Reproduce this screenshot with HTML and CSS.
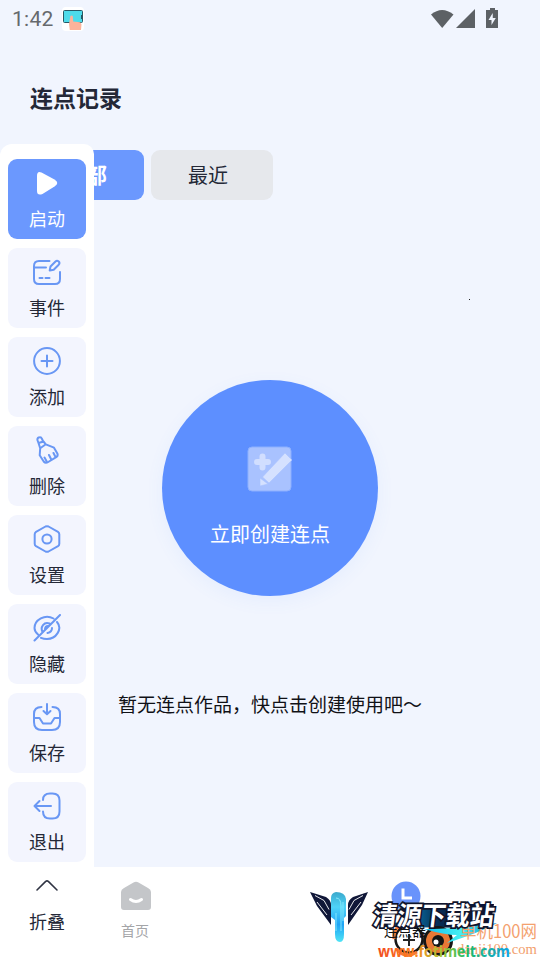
FILE: index.html
```html
<!DOCTYPE html>
<html lang="zh-CN">
<head>
<meta charset="utf-8">
<title>连点记录</title>
<link rel="stylesheet" href="styles.css">
</head>
<body>
<div class="screen">
  <header class="status">
    <span class="time">1:42</span>
    <svg class="app" width="22" height="24" viewBox="0 0 22 24"><rect width="22" height="24" rx="4" fill="#fff"/><rect x="1.5" y="3.5" width="19" height="12" rx="1" fill="#4edbea" stroke="#285865"/><path d="M19 8h2v4h-2z" fill="#285865"/><path d="M8.400 9q1.300-1.200 2.400 0l.4 5.500 7 .7 1.300 2-.5 5.800H7.800L7 17z" fill="#fcb39b"/></svg>
    <svg class="signals" width="70" height="24" viewBox="0 0 70 24" fill="#5d6165"><path d="M1 6.500Q12-2.500 23.500 6.500L12.200 20z"/><path d="M45 1v19H26z"/><path d="M60 0h5v2h3v18H56V2h4z"/><path d="M62.700 5L58.500 12h3v5l4.300-7h-3z" fill="#f1f5fe"/></svg>
  </header>
  <h1>连点记录</h1>
  <nav class="tabs"><span class="tab active">全部</span><span class="tab">最近</span></nav>
  <main>
    <button class="create">
      <svg width="46" height="46" viewBox="0 0 46 46"><rect x="1" y="1" width="43" height="44" rx="4" fill="#a9c2ff" stroke="#8db0ff"/><path d="M15.500 10.500v11M10 16h11" stroke="#d1deff" stroke-width="6" stroke-linecap="round"/><path d="M15.500 31L38 7l7 7-23 23zM13 32l8 6-8 2z" fill="#d5e1ff" stroke="#a9c2ff" stroke-width=".6"/></svg>
      <span>立即创建连点</span>
    </button>
    <p class="empty">暂无连点作品，快点击创建使用吧～</p>
  </main>
  <footer>
    <div class="nav home"><svg width="30" height="30" viewBox="0 0 30 30"><path d="M12.500 1.400Q15 0 17.500 1.400L27 7q3 1.500 3 4v15q0 3-3 3H3q-3 0-3-3V11q0-2.500 3-4z" fill="#c4c6c9"/><path d="M9.500 18.500q5.500 4 11 0" fill="none" stroke="#fff" stroke-width="3" stroke-linecap="round"/></svg><span>首页</span></div>
    <div class="nav clicker"><svg width="30" height="30" viewBox="0 0 30 30"><circle cx="15" cy="15" r="14.500" fill="#6993fb"/><path d="M12 7.500V17h9" fill="none" stroke="#fff" stroke-width="3"/></svg></div>
  </footer>
  <i class="cursor-dot"></i>

  <aside class="panel">
    <div class="tool start"><svg viewBox="0 0 28 28"><path d="M4 7Q4 1.500 8.500 3.500L21.500 10.500Q27 14 21.500 17.500L9.500 25Q4 27 4 22z" fill="#fff"/></svg><span>启动</span></div>
    <div class="tool"><svg viewBox="0 0 28 28"><path d="M16.500 3H6Q1 3 1 8v13q0 5 5 5h16q5 0 5-5v-7M1 9.500h12M6.500 20h3M12.500 20h4M17.500 8.500l5-5q1.500-1.500 3.200 0 1.500 1.500 0 3.200l-5 5-4 .8z"/></svg><span>事件</span></div>
    <div class="tool"><svg viewBox="0 0 28 28"><circle cx="14" cy="14" r="12.900"/><path d="M14 8.500v11M8.500 14h11"/></svg><span>添加</span></div>
    <div class="tool"><svg viewBox="0 0 28 28"><path d="M5.500 7L4.400 4Q4.200 1.500 6.600 1.300 8.300 1 9 3l1.500 3M5.500 7l5-1.500 2.300 2.800-5.600 4zM7.200 12.300l-.5 7 4 6.200q1.800 2.200 4.500.5l8-4.800q2.300-1.600 1-4L21 11.700l-8.200-3.400M11.500 21.500l2 3.500M16 19l2 4M20.500 17l1.500 3"/></svg><span>删除</span></div>
    <div class="tool"><svg viewBox="0 0 28 28"><path d="M12.500 1.500Q14 .8 15.500 1.500l9.500 5.300q1.300.8 1.300 2.500v9.400q0 1.700-1.300 2.500l-9.500 5.300q-1.500.7-3 0L3 21.200q-1.300-.8-1.300-2.500V9.300Q1.700 7.600 3 6.800z"/><circle cx="14" cy="14" r="4.600"/></svg><span>设置</span></div>
    <div class="tool"><svg viewBox="0 0 28 28"><path d="M1.500 26.500L27 1M20.500 4.500C12-.5 1.500 6 1.500 14q0 3.500 3.500 6.500M24 8c6 7-1 17-10 17q-3.300 0-6-1.200M9.500 18C7 13 11 7.500 16.500 9.500M19 14q0 4-4.500 5M12 15q.3-3 3-3"/></svg><span>隐藏</span></div>
    <div class="tool"><svg viewBox="0 0 28 28"><path d="M8.500 4Q1 4 1 11v8q0 8 8 8h10q8 0 8-8v-8q0-7-7.500-7M14 1v10M10.500 8l3.500 3.300L17.500 8M1 15h5.500l3.500 5.500h8l3.500-5.500H27"/></svg><span>保存</span></div>
    <div class="tool"><svg viewBox="0 0 28 28"><path d="M10 8q0-6.500 7-6.500h2.500q7 0 7 7v11q0 7-7 7H17q-7 0-7-7M18 14H1.500M6.500 9L1.500 14l5 5"/></svg><span>退出</span></div>
    <div class="tool fold"><svg viewBox="0 0 28 28"><path d="M4 18L12.700 9.400q1.300-1 2.600 0L24 18"/></svg><span>折叠</span></div>
  </aside>

  <div class="watermark">
    <svg class="art" width="240" height="90" viewBox="0 0 240 90">
      <defs>
        <linearGradient id="stem" x2="0" y2="1"><stop stop-color="#3ba9cc"/><stop offset=".3" stop-color="#4fd3f8"/><stop offset=".65" stop-color="#1fa4f6"/><stop offset="1" stop-color="#4fe4f5"/></linearGradient>
        <linearGradient id="band"><stop stop-color="#0a1b3b"/><stop offset=".25" stop-color="#0878ad"/><stop offset=".5" stop-color="#082e55"/><stop offset="1" stop-color="#0a0c30"/></linearGradient>
        <linearGradient id="url"><stop stop-color="#f14b22"/><stop offset=".28" stop-color="#ff821c"/><stop offset=".48" stop-color="#a9c737"/><stop offset=".66" stop-color="#22ba62"/><stop offset="1" stop-color="#10a4e8"/></linearGradient>
        <linearGradient id="swoosh"><stop stop-color="#10bdf0"/><stop offset=".5" stop-color="#46eef2"/><stop offset="1" stop-color="#0d8fd0"/></linearGradient>
      </defs>
      <path d="M10 22l16 5q5 3 5 8v20L17 36zM68 22l-15 5q-5 3-5 8v20l14-20z" fill="#101738"/>
      <path d="M15 25.500l9 5 5 9M17 32l10 13M63 25.500l-9 5-5 9M61 32L51 45" fill="none" stroke="#fff" stroke-width=".9"/>
      <path d="M31 28q0-5 5-6 9 0 10 7v17l-2 2v16q0 8-4 8-5 0-5-8V50l-4-3z" fill="url(#stem)"/>
      <path d="M36 28q5 0 5 8v25M43 32v19M36 43v18" fill="none" stroke="#9af3ff" stroke-width=".8"/>
      <path d="M118 34h76l-4 24-108-1 3-4 29-1z" fill="url(#band)"/>
      <circle cx="109" cy="69" r="13.500" fill="#fff" stroke="#161616" stroke-width="2.500"/>
      <path d="M94 69q-1-11 9-15 5-3 12-1M97 79q8 11 20 3" fill="none" stroke="#f57a35" stroke-width="3"/>
      <path d="M109 64v12M103 70h12" stroke="#252525" stroke-width="2"/>
      <circle cx="138" cy="71" r="13.500" fill="#e87835" stroke="#151515" stroke-width="3"/>
      <circle cx="138" cy="71" r="6" fill="#151515"/><circle cx="136" cy="72" r="2.500" fill="#fff"/>
      <text class="clicker-label" x="84" y="66">连点器</text>
      <path d="M124 59q30 0 73-6-16 9-50 20l10-8q-12 0-33-6z" fill="url(#swoosh)"/>
      <text class="partner" x="160" y="68" textLength="77" lengthAdjust="spacingAndGlyphs">单机100网</text>
      <text class="domain" x="157" y="84" textLength="80" lengthAdjust="spacingAndGlyphs">danji100.com</text>
      <g transform="skewX(-7)"><text class="brand" x="79" y="55" textLength="121" lengthAdjust="spacingAndGlyphs">清源下载站</text></g>
      <text class="url" x="78" y="87" textLength="132" lengthAdjust="spacingAndGlyphs" fill="url(#url)">www.fotimeit.com</text>
    </svg>
  </div>
</div>
</body>
</html>
```
FILE: styles.css
```css
* { box-sizing: border-box; }
body { margin: 0; }
.screen {
  position: relative;
  display: flex;
  flex-direction: column;
  width: 540px;
  height: 960px;
  overflow: hidden;
  background: #f1f5fe;
  color: #242837;
  font-family: Roboto, "Noto Sans CJK SC", sans-serif;
}
.status { display: flex; align-items: center; height: 38px; padding-left: 12px; }
.time { width: 50px; color: #66696d; font-size: 21px; letter-spacing: .3px; }
.signals { margin-left: auto; margin-right: 40px; margin-top: 1px; }
h1 { margin: 44px 0 0 30px; font-size: 23px; line-height: 36px; font-weight: 700; }
.tabs { display: flex; gap: 7px; margin: 32px 0 0 22px; }
.tab {
  width: 122px;
  height: 50px;
  padding-right: 8px;
  border-radius: 9px;
  background: #e6e8ec;
  text-align: center;
  font-size: 20px;
  line-height: 52px;
}
.tab.active { padding: 0 0 0 4px; background: #6b98fe; color: #fff; font-size: 22px; font-weight: 700; }
main { flex: 1; display: flex; flex-direction: column; align-items: center; padding-top: 180px; }
.create {
  display: flex;
  flex-direction: column;
  align-items: center;
  gap: 28px;
  width: 216px;
  height: 216px;
  padding: 66px 0 0;
  border: 0;
  border-radius: 50%;
  background: #5d8fff;
  box-shadow: 0 5px 18px #5c8eff12;
  color: #fff;
  font: 20px/30px Roboto, "Noto Sans CJK SC", sans-serif;
}
.empty { margin: 95px 0 0; color: #101116; font-size: 19px; line-height: 30px; }
footer { display: flex; height: 93px; background: #fff; }
.nav { display: flex; flex-direction: column; align-items: center; width: 270px; padding-top: 14px; font-size: 14px; line-height: 20px; }
.nav span { margin-top: 10px; }
.nav.home { color: #a4a5a8; }
.home svg { margin-left: 2px; }
.clicker svg { margin-left: 1px; }
.clicker-label { fill: #111; font: 14px "Noto Sans CJK SC", sans-serif; }
.cursor-dot { position: absolute; left: 469px; top: 299px; width: 1px; height: 1px; background: #222; }
.panel {
  position: absolute;
  left: 0;
  top: 144px;
  display: flex;
  flex-direction: column;
  gap: 9px;
  width: 94px;
  height: 816px;
  padding: 15px 8px 0;
  border-radius: 12px 10px 0 0;
  background: #fff;
}
.tool {
  display: flex;
  flex-direction: column;
  align-items: center;
  flex: 0 0 80px;
  padding-top: 10px;
  border-radius: 9px;
  background: #f3f5fe;
  font-size: 18px;
  line-height: 26px;
}
.tool svg { width: 28px; height: 28px; margin-bottom: 10px; fill: none; stroke: #6997f4; stroke-width: 2; stroke-linecap: round; stroke-linejoin: round; }
.start { background: #6b98fe; color: #fff; }
.tool.start svg { stroke: none; }
.fold { background: #fff; padding-top: 1px; }
.tool.fold svg { stroke: #303443; stroke-width: 1.6; }
.watermark { position: absolute; left: 300px; top: 870px; width: 240px; height: 90px; }
.art { display: block; }
.brand { fill: #fff; stroke: #10152c; stroke-width: 3.5px; paint-order: stroke; font: 700 26px "Noto Sans CJK SC", sans-serif; }
.partner { fill: #f4a16e; font: 18px "Noto Sans CJK SC", sans-serif; }
.domain { fill: #f2a06d; font: 15px "Liberation Serif", serif; }
.url { font: bold 16px "Open Sans", sans-serif; }
```
